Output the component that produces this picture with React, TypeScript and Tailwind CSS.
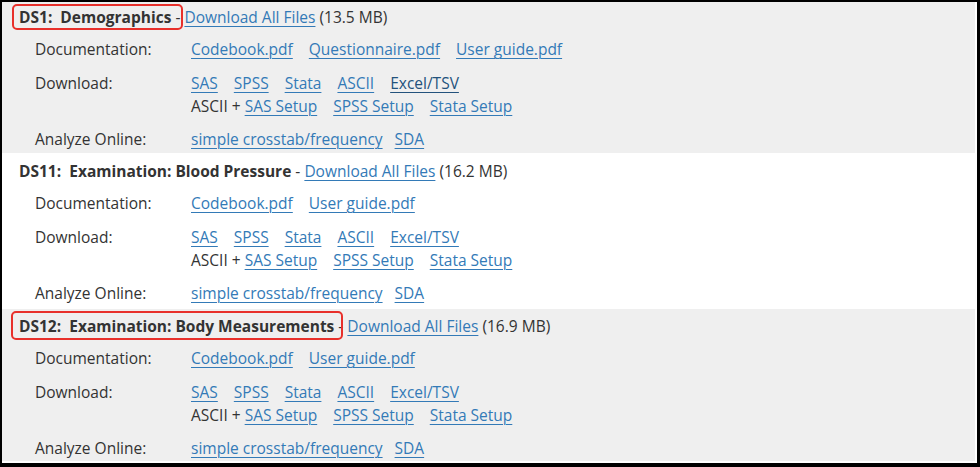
import type { ReactNode } from "react";

type Link = { label: string; visited?: boolean };

type Dataset = {
  id: string;
  title: string;
  size: string;
  docs: string[];
  downloads: Link[];
  gray: boolean;
  pt: string;
  pb: string;
  box?: { left: number; top: number; width: number; height: number };
};

const datasets: Dataset[] = [
  {
    id: "DS1",
    title: "Demographics",
    size: "13.5 MB",
    docs: ["Codebook.pdf", "Questionnaire.pdf", "User guide.pdf"],
    downloads: [{ label: "SAS" }, { label: "SPSS" }, { label: "Stata" }, { label: "ASCII" }, { label: "Excel/TSV", visited: true }],
    gray: true,
    pt: "pt-[4px]",
    pb: "pb-[2px]",
    box: { left: -7, top: -2, width: 171, height: 26 },
  },
  {
    id: "DS11",
    title: "Examination: Blood Pressure",
    size: "16.2 MB",
    docs: ["Codebook.pdf", "User guide.pdf"],
    downloads: [{ label: "SAS" }, { label: "SPSS" }, { label: "Stata" }, { label: "ASCII" }, { label: "Excel/TSV" }],
    gray: false,
    pt: "pt-[7px]",
    pb: "pb-[4px]",
  },
  {
    id: "DS12",
    title: "Examination: Body Measurements",
    size: "16.9 MB",
    docs: ["Codebook.pdf", "User guide.pdf"],
    downloads: [{ label: "SAS" }, { label: "SPSS" }, { label: "Stata" }, { label: "ASCII" }, { label: "Excel/TSV" }],
    gray: true,
    pt: "pt-[6px]",
    pb: "pb-[1px]",
    box: { left: -8, top: -4, width: 332, height: 29 },
  },
];

function A({ children, visited }: { children: ReactNode; visited?: boolean }) {
  return (
    <a
      href="#"
      className={
        visited
          ? "text-[#23527c] underline decoration-1 underline-offset-[3px]"
          : "text-[#337ab7] underline decoration-1 underline-offset-[3px]"
      }
    >
      {children}
    </a>
  );
}

function Row({ label, children }: { label: string; children: ReactNode }) {
  return (
    <div className="grid grid-cols-[156px_1fr] pl-4">
      <div>{label}</div>
      <div>{children}</div>
    </div>
  );
}

function Section({ ds }: { ds: Dataset }) {
  return (
    <div className={`${ds.gray ? "bg-[#efefef]" : "bg-white"} ${ds.pt} ${ds.pb} pl-[17px]`}>
      <div className="relative">
        <span className="whitespace-pre font-bold">
          {ds.id}:  {ds.title}
        </span>{" "}
        - <A>Download All Files</A> ({ds.size})
        {ds.box ? (
          <div
            className="pointer-events-none absolute rounded-[5px] border-2 border-[#e8302b]"
            style={{ left: ds.box.left, top: ds.box.top, width: ds.box.width, height: ds.box.height }}
          />
        ) : null}
      </div>
      <div className="mt-[9px] flex flex-col gap-[10.5px]">
        <Row label="Documentation:">
          <div className="flex gap-4">
            {ds.docs.map((d) => (
              <A key={d}>{d}</A>
            ))}
          </div>
        </Row>
        <Row label="Download:">
          <div className="flex gap-4">
            {ds.downloads.map((d) => (
              <A key={d.label} visited={d.visited}>
                {d.label}
              </A>
            ))}
          </div>
          <div className="flex gap-4">
            <span>
              ASCII + <A>SAS Setup</A>
            </span>
            <A>SPSS Setup</A>
            <A>Stata Setup</A>
          </div>
        </Row>
        <Row label="Analyze Online:">
          <div className="flex gap-3">
            <A>simple crosstab/frequency</A>
            <A>SDA</A>
          </div>
        </Row>
      </div>
    </div>
  );
}

export default function App() {
  return (
    <div
      className="h-[467px] w-[980px] overflow-hidden border-b-4 border-l-2 border-r-[3px] border-t-2 border-black bg-white text-[15.5px] leading-[23px] text-[#333]"
      style={{ fontFamily: '"Open Sans", "Liberation Sans", sans-serif' }}
    >
      <div className="pr-[2px]">
        {datasets.map((ds) => (
          <Section key={ds.id} ds={ds} />
        ))}
      </div>
    </div>
  );
}
